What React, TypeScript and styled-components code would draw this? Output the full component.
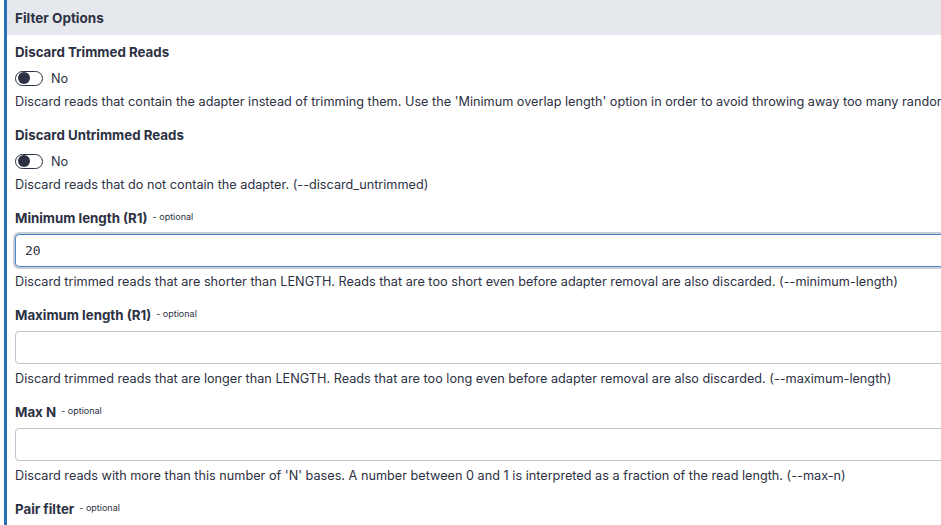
import React from "react";
import styled, { createGlobalStyle } from "styled-components";

const Global = createGlobalStyle`
  html, body { margin: 0; padding: 0; background: #fff; overflow: hidden; }
  body { font-family: Inter, "Noto Sans", sans-serif; color: #2c3143; font-size: 12.7px; }
  * { box-sizing: border-box; }
`;

const Section = styled.div`
  margin-left: 4px;
  border-left: 3px solid #2c6eb4;
  width: 1200px;
`;

const Header = styled.div`
  height: 35px;
  background: #e5e8ec;
  display: flex;
  align-items: center;
  padding-left: 8px;
  font-weight: 700;
  font-size: 13.5px;
`;

const Body = styled.div`
  padding: 7px 8px 0 8px;
  display: flex;
  flex-direction: column;
`;

const Row = styled.div`
  display: flex;
  flex-direction: column;
  margin-bottom: 13px;
`;

const Title = styled.div<{ $gap: number }>`
  display: flex;
  align-items: baseline;
  gap: 5px;
  height: 20px;
  line-height: 20px;
  font-weight: 700;
  font-size: 13.3px;
  margin-bottom: ${(p) => p.$gap}px;
`;

const Optional = styled.span`
  font-size: 9px;
  font-weight: 400;
  position: relative;
  top: -3px;
`;

const Help = styled.div<{ $gap: number }>`
  line-height: 20px;
  margin-top: ${(p) => p.$gap}px;
  white-space: nowrap;
`;

const SwitchRow = styled.label`
  display: flex;
  align-items: center;
  gap: 8px;
  height: 16px;
`;

const SwitchTrack = styled.span`
  width: 28px;
  height: 15px;
  border: 1px solid #2c3143;
  border-radius: 8px;
  display: flex;
  align-items: center;
  padding-left: 1.5px;
`;

const SwitchKnob = styled.span`
  width: 12px;
  height: 12px;
  border-radius: 50%;
  background: #2c3143;
`;

const Input = styled.input<{ $focus?: boolean }>`
  width: 100%;
  height: 33px;
  border: 1px solid ${(p) => (p.$focus ? "#4a86c9" : "#bcc3ce")};
  border-radius: 4px;
  padding: 0 9px;
  font-family: "DejaVu Sans Mono", monospace;
  font-size: 13px;
  color: #2c3143;
  outline: none;
  box-shadow: ${(p) => (p.$focus ? "0 0 0 2px #c8ced6" : "none")};
`;

const Toggle = ({ label }: { label: string }) => (
  <SwitchRow>
    <SwitchTrack>
      <SwitchKnob />
    </SwitchTrack>
    <span>{label}</span>
  </SwitchRow>
);

const BoolRow = ({ title, help }: { title: string; help: string }) => (
  <Row>
    <Title $gap={8}>{title}</Title>
    <Toggle label="No" />
    <Help $gap={6}>{help}</Help>
  </Row>
);

const TextRow = ({ title, help, value, focus }: { title: string; help: string; value?: string; focus?: boolean }) => (
  <Row>
    <Title $gap={6}>
      {title}
      <Optional>- optional</Optional>
    </Title>
    <Input $focus={focus} defaultValue={value} />
    <Help $gap={5}>{help}</Help>
  </Row>
);

export default function App() {
  return (
    <>
      <Global />
      <Section>
        <Header>Filter Options</Header>
        <Body>
          <BoolRow
            title="Discard Trimmed Reads"
            help="Discard reads that contain the adapter instead of trimming them. Use the 'Minimum overlap length' option in order to avoid throwing away too many randomly matching reads! (--discard_trimmed)"
          />
          <BoolRow
            title="Discard Untrimmed Reads"
            help="Discard reads that do not contain the adapter. (--discard_untrimmed)"
          />
          <TextRow
            title="Minimum length (R1)"
            value="20"
            focus
            help="Discard trimmed reads that are shorter than LENGTH. Reads that are too short even before adapter removal are also discarded. (--minimum-length)"
          />
          <TextRow
            title="Maximum length (R1)"
            help="Discard trimmed reads that are longer than LENGTH. Reads that are too long even before adapter removal are also discarded. (--maximum-length)"
          />
          <TextRow
            title="Max N"
            help="Discard reads with more than this number of 'N' bases. A number between 0 and 1 is interpreted as a fraction of the read length. (--max-n)"
          />
          <Row>
            <Title $gap={0}>
              Pair filter
              <Optional>- optional</Optional>
            </Title>
          </Row>
        </Body>
      </Section>
    </>
  );
}
